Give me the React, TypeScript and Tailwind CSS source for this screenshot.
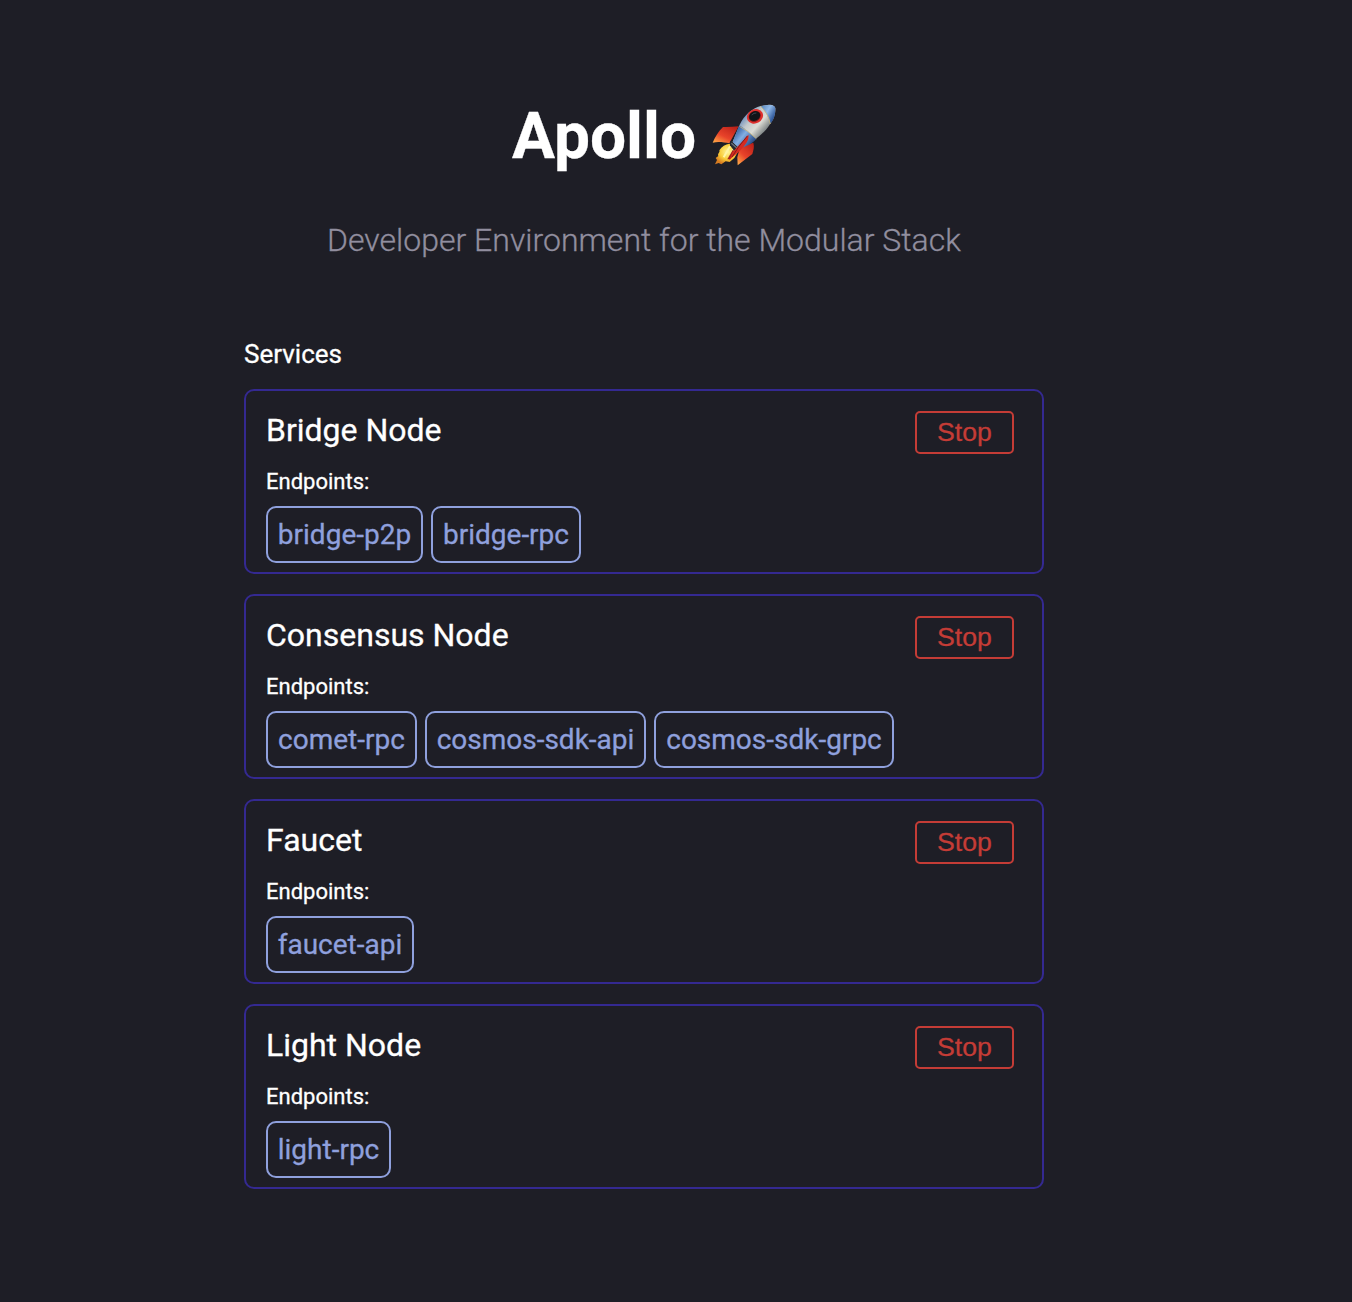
const services = [
  { name: "Bridge Node", endpoints: [["bridge-p2p", "w-[157px]"], ["bridge-rpc", "w-[150px]"]] },
  { name: "Consensus Node", endpoints: [["comet-rpc", "w-[151px]"], ["cosmos-sdk-api", "w-[221px]"], ["cosmos-sdk-grpc", "w-[240px]"]] },
  { name: "Faucet", endpoints: [["faucet-api", "w-[148px]"]] },
  { name: "Light Node", endpoints: [["light-rpc", "w-[125px]"]] },
];

function Rocket() {
  return (
    <svg viewBox="0 0 216 228" className="-mt-1.5 h-[76px] w-[72px] shrink-0 overflow-visible" role="img" aria-label="Rocket">
      <defs>
        <linearGradient id="hull" gradientUnits="userSpaceOnUse" x1="112" y1="70" x2="172" y2="122">
          <stop offset="0" stopColor="#6f91bd" />
          <stop offset="0.3" stopColor="#c3c9cb" />
          <stop offset="0.62" stopColor="#dcdcd5" />
          <stop offset="1" stopColor="#737a7c" />
        </linearGradient>
        <linearGradient id="blue" gradientUnits="userSpaceOnUse" x1="90" y1="108" x2="138" y2="148">
          <stop offset="0" stopColor="#355f9f" />
          <stop offset="0.45" stopColor="#83afe3" />
          <stop offset="1" stopColor="#2d4f89" />
        </linearGradient>
        <linearGradient id="nose" gradientUnits="userSpaceOnUse" x1="172" y1="32" x2="216" y2="58">
          <stop offset="0" stopColor="#5b88bd" />
          <stop offset="0.45" stopColor="#91b9e8" />
          <stop offset="1" stopColor="#224b91" />
        </linearGradient>
        <linearGradient id="fin" x1="0.9" y1="0" x2="0.15" y2="1">
          <stop offset="0" stopColor="#b91f18" />
          <stop offset="0.6" stopColor="#e8432a" />
          <stop offset="1" stopColor="#ffa545" />
        </linearGradient>
        <radialGradient id="flame" cx="0.55" cy="0.4" r="0.6">
          <stop offset="0" stopColor="#fff69a" />
          <stop offset="0.6" stopColor="#f8cb37" />
          <stop offset="1" stopColor="#d77b20" />
        </radialGradient>
      </defs>
      <path d="M104 91C88 92 72 94 57 93C43 107 33 123 26 140C42 136 61 139 76 142Z" fill="url(#fin)" />
      <path d="M108 153L148 140C152 152 148 163 145 174L101 208L100 184Z" fill="url(#fin)" />
      <path d="M76 143C65 145 53 151 46 163C49 169 39 174 43 180L35 186L39 192L33 205L44 201L52 205L65 196L77 198L91 186L103 165Z" fill="url(#flame)" />
      <path d="M78 151L68 168L59 184M90 157L80 177" fill="none" stroke="#fff5a4" strokeWidth="6" />
      <path d="M70 190L86 162L94 166L79 190Z" fill="#a42119" />
      <path d="M79 134L92 139L105 153L101 163L90 164L78 148Z" fill="#252931" />
      <path d="M82 142L101 158" stroke="#68727a" strokeWidth="4" />
      <path d="M107 86C121 57 144 37 170 30L190 27C203 24 211 28 214 36C215 52 210 72 199 83C184 108 166 120 154 130L108 158L86 137Z" fill="url(#hull)" />
      <path d="M106 88L120 97L147 119L157 128C146 142 127 152 106 157L86 138Z" fill="url(#blue)" />
      <path d="M170 31C185 26 208 24 213 33C216 49 211 70 199 83C194 62 184 45 170 31Z" fill="url(#nose)" />
      <path d="M169 31C184 43 195 62 199 84M106 91Q130 102 157 128" fill="none" stroke="#cbb779" strokeWidth="2.5" />
      <path d="M133 116C137 129 125 146 107 165L75 193L86 169L105 147Z" fill="#d72a20" />
      <path d="M130 120L105 151L84 183" fill="none" stroke="#811b1b" strokeWidth="3" />
      <ellipse cx="153" cy="61" rx="25" ry="21" transform="rotate(-28 153 61)" fill="#df2f2c" />
      <ellipse cx="152" cy="61" rx="19" ry="15.5" transform="rotate(-28 152 61)" fill="#761817" />
      <ellipse cx="152" cy="60" rx="17" ry="14" transform="rotate(-28 152 60)" fill="#101318" />
      <path d="M143 57Q150 50 157 51" fill="none" stroke="#3d464e" strokeWidth="3" />
    </svg>
  );
}

export default function App() {
  return (
    <div className="h-[1302px] w-[1352px] overflow-hidden bg-[#1e1e26] pl-[244px] font-['Roboto',sans-serif] text-white">
      <main className="w-[800px] [-webkit-text-stroke:0.3px_currentColor]">
        <h1 className="flex h-[198px] items-center justify-center gap-2 pt-[76px] text-[64px] font-bold leading-[76px]">
          <span>Apollo</span>
          <Rocket />
        </h1>
        <p className="mt-[20px] text-center text-[32px] font-light leading-[44px] text-[#918e9f]">Developer Environment for the Modular Stack</p>
        <h2 className="mt-[76px] text-[26px] leading-[32px]">Services</h2>
        <div className="mt-[19px] flex flex-col gap-5">
          {services.map((s) => (
            <section key={s.name} className="h-[185px] rounded-[10px] border-2 border-[#342991] pl-5 pr-7 pt-5">
              <div className="flex items-start justify-between">
                <h3 className="text-[32px] leading-[38px]">{s.name}</h3>
                <button className="h-[43px] w-[99px] rounded-[5px] border-2 border-[#c43c36] font-['Liberation_Sans',sans-serif] text-[26.67px] leading-[37px] text-[#c43c36]">Stop</button>
              </div>
              <p className="mt-[15px] text-[22px] leading-[26px]">Endpoints:</p>
              <div className="mt-[11px] flex gap-2">
                {s.endpoints.map(([label, w]) => (
                  <a key={label} className={`${w} h-[57px] rounded-[10px] border-2 border-[#8fa0dd] text-center text-[28px] leading-[53px] text-[#8fa0dd]`}>{label}</a>
                ))}
              </div>
            </section>
          ))}
        </div>
      </main>
    </div>
  );
}
